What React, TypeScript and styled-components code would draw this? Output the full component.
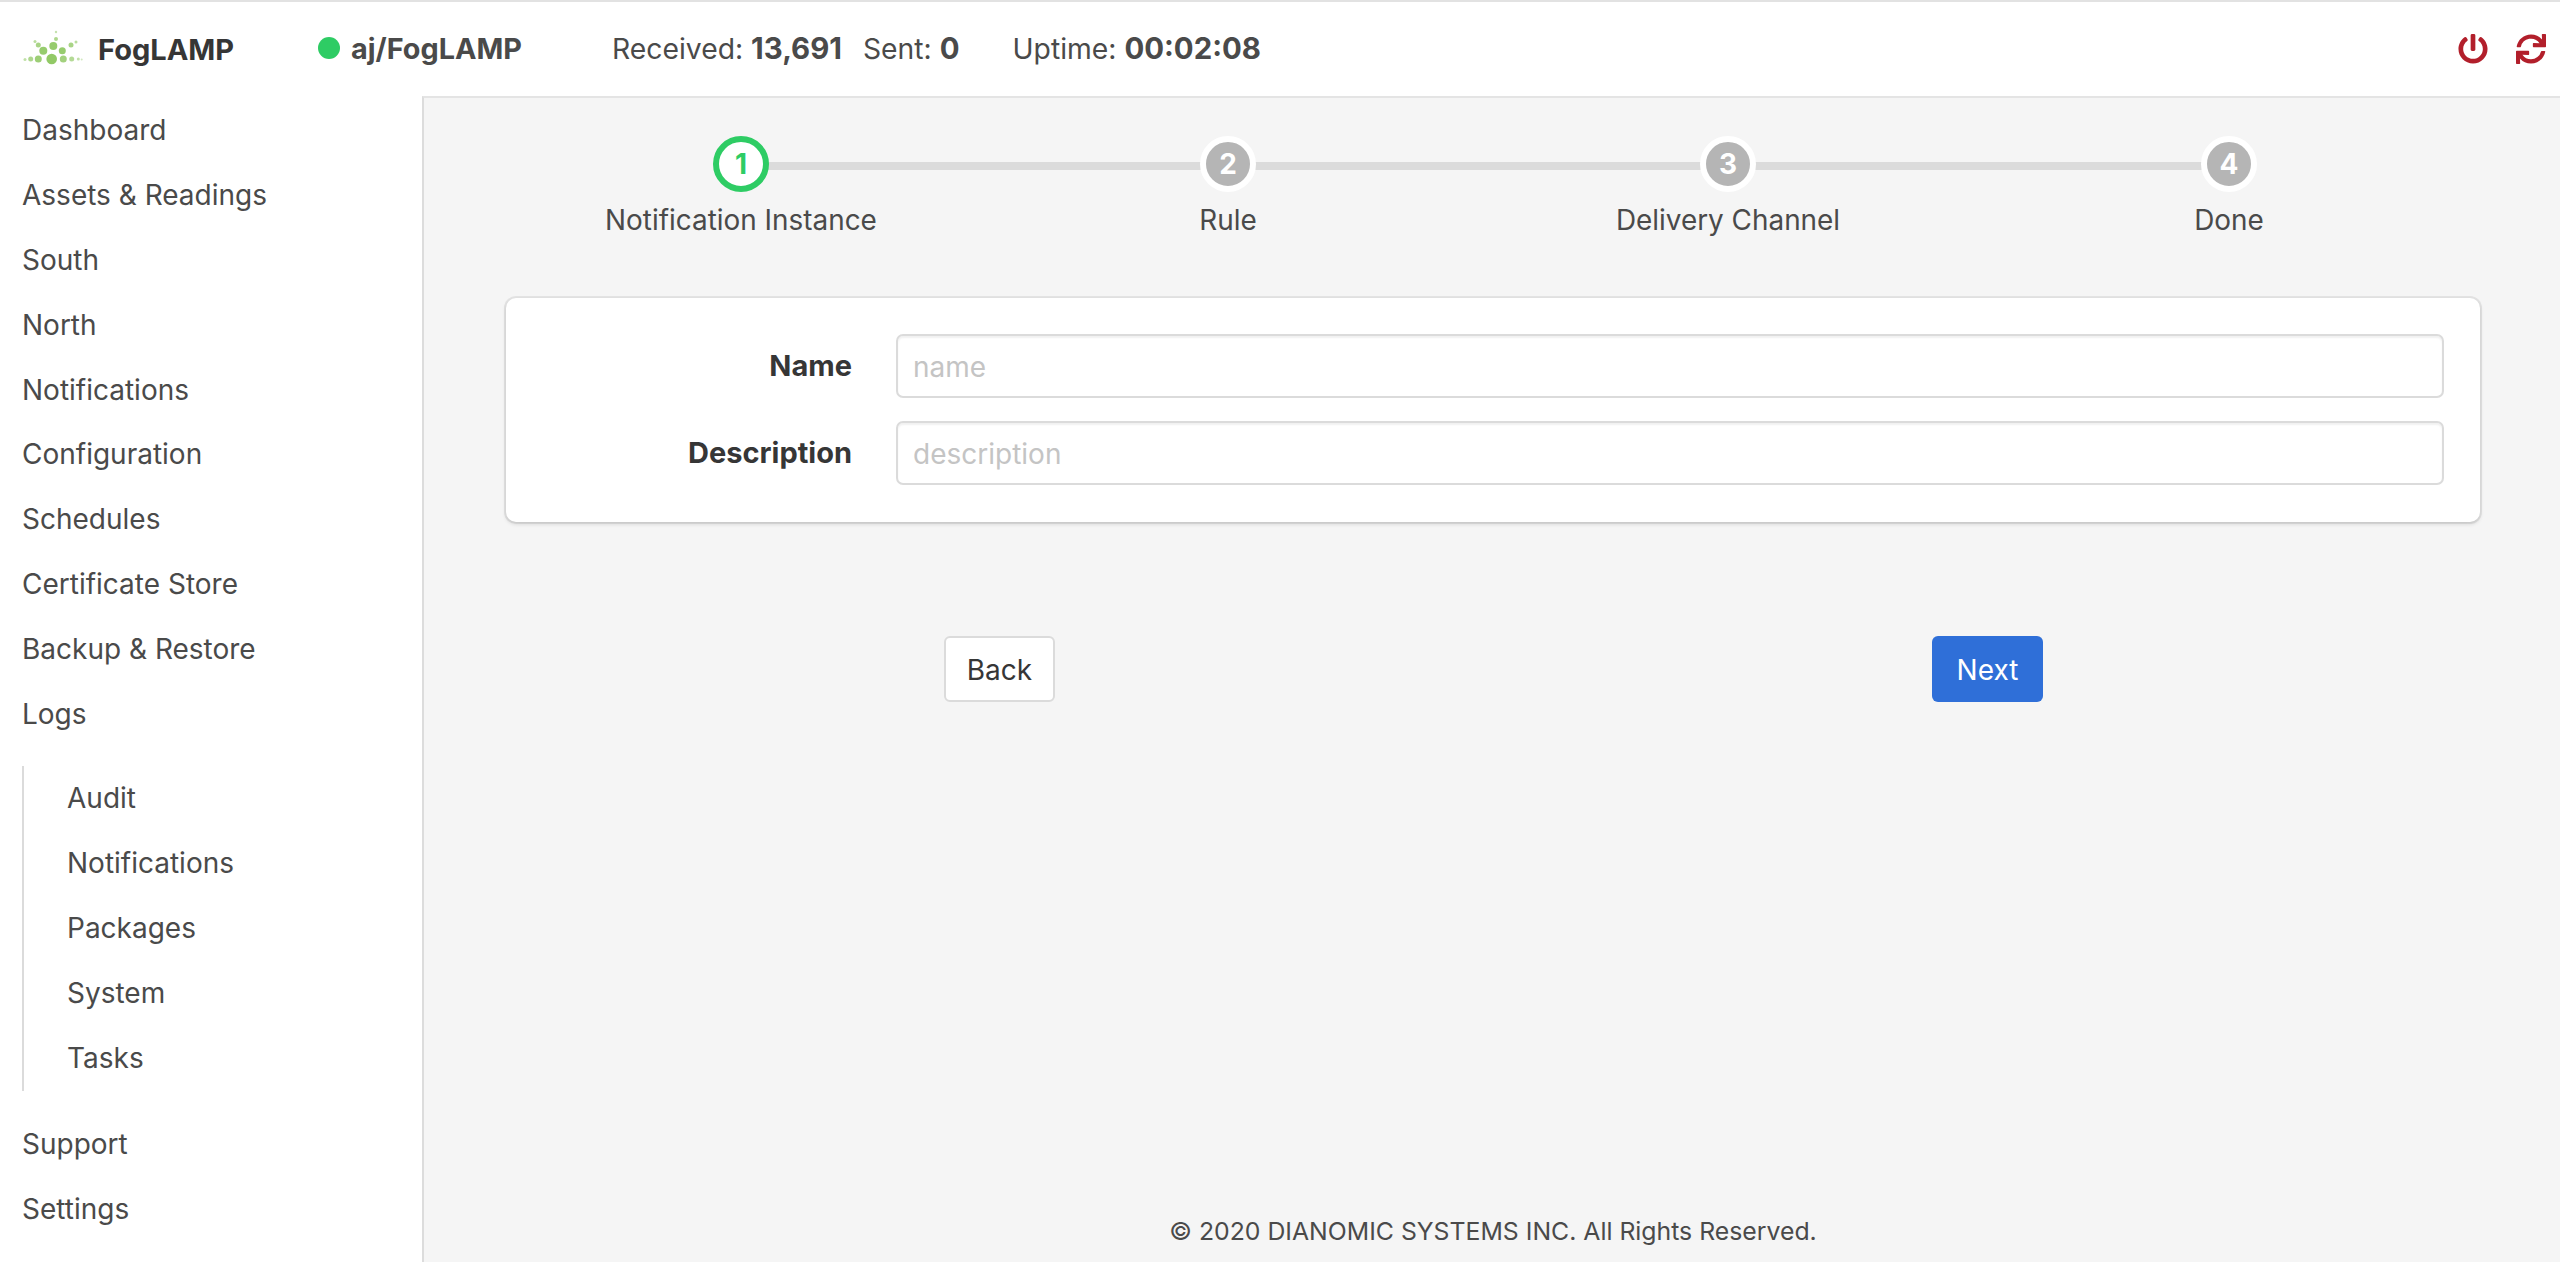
import React from "react";
import styled, { createGlobalStyle } from "styled-components";
import { FaPowerOff, FaSync } from "react-icons/fa";

const Global = createGlobalStyle`
  html, body { margin: 0; padding: 0; height: 100%; }
  body { font-family: Inter, Roboto, "Liberation Sans", sans-serif; color: #4a4a4a; background: #fff; overflow: hidden; }
  * { box-sizing: border-box; }
`;

const Page = styled.div`
  width: 2560px; height: 1262px; display: flex; flex-direction: column;
  border-top: 2px solid #e2e2e2;
`;
const TopBar = styled.header`
  height: 94px; flex: none; display: flex; align-items: center; padding: 0 14px 0 22px;
  background: #fff; font-size: 28.3px;
`;
const Brand = styled.div`
  display: flex; align-items: center; width: 296px; font-weight: 700; font-size: 29px; color: #363636;
`;
const LogoMark = styled.svg` width: 60px; height: 36px; margin-right: 16px; flex: none; overflow: visible; `;
const Instance = styled.div`
  display: flex; align-items: center; width: 294px; padding-bottom: 2px; font-weight: 700; font-size: 28.8px; color: #4a4a4a;
`;
const Dot = styled.span`
  width: 22px; height: 22px; border-radius: 50%; background: #2ecc64; margin-right: 11px; flex: none;
`;
const Stats = styled.div` display: flex; flex: 1; align-items: center; padding-bottom: 2px; `;
const Stat = styled.span<{ $gap: number }>`
  margin-right: ${p => p.$gap}px; white-space: nowrap;
  b { font-weight: 700; font-size: 29.4px; }
`;
const Actions = styled.div` display: flex; align-items: center; gap: 28px; color: #b21f2b; font-size: 30px; `;
const Body = styled.div` flex: 1; display: flex; min-height: 0; `;
const Sidebar = styled.nav`
  width: 422px; flex: none; background: #fff; padding: 2px 0 0 22px; font-size: 28px;
`;
const Item = styled.div`
  height: 64.8px; display: flex; align-items: center; color: #4a4a4a; white-space: nowrap;
`;
const SubList = styled.div`
  border-left: 2px solid #dbdbdb; margin: 20px 0 21px 0; padding-left: 43px;
  height: 325px;
`;
const Main = styled.main`
  flex: 1; background: #f5f5f5; border-left: 2px solid #dcdcdc; border-top: 2px solid #e4e4e4; display: flex; flex-direction: column;
  padding: 0 80px 0 82px; min-width: 0;
`;
const Stepper = styled.div` display: flex; margin: 0 0 0 -5px; padding-top: 38px; height: 200px; `;
const Step = styled.div<{ $w: number }>`
  width: ${p => p.$w}px; flex: none; display: flex; flex-direction: column; align-items: center; position: relative;
`;
const Connector = styled.span<{ $w: number }>`
  position: absolute; top: 26px; left: 50%; width: ${p => p.$w}px; height: 8px; background: #dbdbdb; z-index: 0;
`;
const Circle = styled.div<{ $active?: boolean }>`
  width: 56px; height: 56px; border-radius: 50%; z-index: 1; display: flex; align-items: center; justify-content: center;
  font-weight: 700; font-size: 28px;
  background: ${p => (p.$active ? "#fff" : "#b5b5b5")};
  color: ${p => (p.$active ? "#2ecc64" : "#fff")};
  border: ${p => (p.$active ? "6px solid #2ecc64" : "6px solid #fff")};
`;
const StepLabel = styled.div` margin-top: 10px; font-size: 27.9px; line-height: 36px; white-space: nowrap; color: #4a4a4a; `;
const Card = styled.section`
  height: 224px; background: #fff; border-radius: 10px; padding: 36px 36px 0 0;
  box-shadow: 0 2px 4px rgba(10,10,10,.14), 0 0 0 2px rgba(10,10,10,.07);
  display: flex; flex-direction: column; gap: 23px;
`;
const Row = styled.div` display: flex; align-items: center; `;
const FieldLabel = styled.label`
  width: 390px; flex: none; text-align: right; padding-right: 44px; padding-bottom: 2px; font-weight: 700; font-size: 29px; color: #363636;
`;
const Input = styled.input`
  flex: 1; height: 64px; min-width: 0; border: 2px solid #dbdbdb; border-radius: 7px; padding: 2px 15px 0;
  background: #fff; font: 28px Inter, sans-serif; color: #363636; outline: none;
  box-shadow: inset 0 2px 2px rgba(10,10,10,.06);
  &::placeholder { color: #c4c4c4; }
`;
const Buttons = styled.div` display: flex; justify-content: space-between; width: 1099px; margin: 114px 0 0 438px; `;
const Button = styled.button<{ $primary?: boolean }>`
  width: 111px; height: 66px; border-radius: 6px; font: 28px Inter, sans-serif; cursor: pointer; padding: 2px 0 0;
  background: ${p => (p.$primary ? "#2f6fd8" : "#fff")};
  color: ${p => (p.$primary ? "#fff" : "#363636")};
  border: ${p => (p.$primary ? "none" : "2px solid #dbdbdb")};
`;
const Footer = styled.footer`
  margin-top: auto; height: 46px; text-align: center; font-size: 24.8px; line-height: 30px; color: #4a4a4a;
`;

const navTop = ["Dashboard","Assets & Readings","South","North","Notifications","Configuration","Schedules","Certificate Store","Backup & Restore","Logs"];
const navSub = ["Audit","Notifications","Packages","System","Tasks"];
const navEnd = ["Support","Settings"];
const steps = [
  { n: 1, label: "Notification Instance", w: 480, line: 487 },
  { n: 2, label: "Rule", w: 494, line: 500 },
  { n: 3, label: "Delivery Channel", w: 506, line: 501 },
  { n: 4, label: "Done", w: 496, line: 0 },
];
const dots: [number, number, number, number][] = [
  [29.7,28,5.3,.95],[16.3,28,3.5,.85],[41.3,28,3.5,.8],[8.7,28,2.5,.7],[49.7,28,2.5,.65],[3,28.5,1.5,.55],[56.3,28,1.5,.55],[59.7,28.5,1,.4],
  [21.3,19.7,4,.9],[40.3,19.7,3.5,.9],[31.3,15,4,.9],[16.3,14,2.5,.75],[49,14,2.5,.75],[13,10.5,1.5,.6],[54,11,1.5,.6],[34,8,2,.7],[34,1,1.2,.5],
];

export default function App() {
  return (
    <Page>
      <Global />
      <TopBar>
        <Brand>
          <LogoMark viewBox="0 0 60 36">
            {dots.map(([x, y, r, o], i) => <circle key={i} cx={x} cy={y} r={r} fill="#8cc65e" opacity={o} />)}
          </LogoMark>
          FogLAMP
        </Brand>
        <Instance><Dot />aj/FogLAMP</Instance>
        <Stats>
          <Stat $gap={21}>Received: <b>13,691</b></Stat>
          <Stat $gap={53}>Sent: <b>0</b></Stat>
          <Stat $gap={0}>Uptime: <b>00:02:08</b></Stat>
        </Stats>
        <Actions><FaPowerOff /><FaSync /></Actions>
      </TopBar>
      <Body>
        <Sidebar>
          {navTop.map(t => <Item key={t}>{t}</Item>)}
          <SubList>{navSub.map(t => <Item key={t}>{t}</Item>)}</SubList>
          {navEnd.map(t => <Item key={t}>{t}</Item>)}
        </Sidebar>
        <Main>
          <Stepper>
            {steps.map(s => (
              <Step key={s.n} $w={s.w}>
                {s.line > 0 && <Connector $w={s.line} />}
                <Circle $active={s.n === 1}>{s.n}</Circle>
                <StepLabel>{s.label}</StepLabel>
              </Step>
            ))}
          </Stepper>
          <Card>
            <Row><FieldLabel>Name</FieldLabel><Input placeholder="name" /></Row>
            <Row><FieldLabel>Description</FieldLabel><Input placeholder="description" /></Row>
          </Card>
          <Buttons><Button>Back</Button><Button $primary>Next</Button></Buttons>
          <Footer>© 2020 DIANOMIC SYSTEMS INC. All Rights Reserved.</Footer>
        </Main>
      </Body>
    </Page>
  );
}
